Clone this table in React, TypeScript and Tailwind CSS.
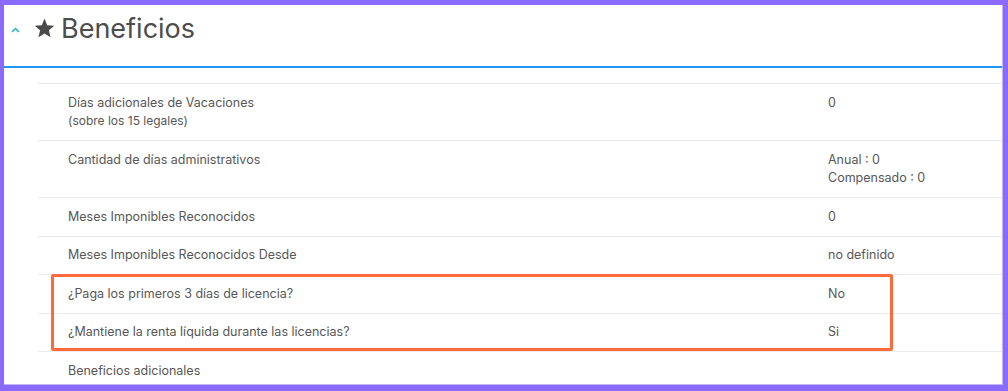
import React from "react";

type Row = {
  label: string;
  sub?: string;
  values: string[];
};

const rows: Row[] = [
  {
    label: "Días adicionales de Vacaciones",
    sub: "(sobre los 15 legales)",
    values: ["0"],
  },
  {
    label: "Cantidad de días administrativos",
    values: ["Anual : 0", "Compensado : 0"],
  },
  { label: "Meses Imponibles Reconocidos", values: ["0"] },
  { label: "Meses Imponibles Reconocidos Desde", values: ["no definido"] },
  { label: "¿Paga los primeros 3 días de licencia?", values: ["No"] },
  { label: "¿Mantiene la renta líquida durante las licencias?", values: ["Si"] },
  { label: "Beneficios adicionales", values: [] },
];

function StarIcon() {
  return (
    <svg width="21" height="20" viewBox="0 0 24 23" className="shrink-0">
      <path
        d="M12 0.6l3.1 7.6 8.2 0.6-6.3 5.3 2 8-7-4.4-7 4.4 2-8L0.7 8.8l8.2-0.6z"
        fill="#4a4a4a"
      />
    </svg>
  );
}

function ChevronUp() {
  return (
    <svg width="9" height="6" viewBox="0 0 9 6" className="shrink-0">
      <path d="M1 5L4.5 1.5L8 5" fill="none" stroke="#1fb3cc" strokeWidth="1.5" />
    </svg>
  );
}

export default function App() {
  return (
    <div
      className="relative h-[391px] w-[1008px] overflow-hidden border-[#8a6bfe] border-t-[5px] border-l-4 border-r-[5px] border-b-[6px] bg-white"
      style={{ fontFamily: "Inter, 'Noto Sans', sans-serif" }}
    >
      <div className="h-full border-r border-b border-[#c2b4ff]">
        {/* header */}
        <div className="flex h-[61px] items-start pt-[9px] pl-[7px]">
          <div className="flex h-[28px] items-center">
            <span className="mt-[3px]">
              <ChevronUp />
            </span>
            <span className="ml-[14px]">
              <StarIcon />
            </span>
            <h2 className="ml-[6px] text-[27px] leading-none text-[#4d4d4d]">
              Beneficios
            </h2>
          </div>
        </div>
        <div className="h-[2px] bg-[#2196f3]" />

        {/* rows */}
        <div className="ml-[34px] mt-[15px] border-t border-[#ebebeb]">
          {rows.map((row) => (
            <div
              key={row.label}
              className="flex border-b border-[#ebebeb] py-[9.5px] text-[12.5px] leading-[18.5px] text-[#575757]"
            >
              <div className="w-[790px] shrink-0 pl-[30px]">
                <div>{row.label}</div>
                {row.sub && <div className="text-[12px]">{row.sub}</div>}
              </div>
              <div>
                {row.values.map((v) => (
                  <div key={v}>{v}</div>
                ))}
              </div>
            </div>
          ))}
        </div>
      </div>

      {/* highlight box */}
      <div className="absolute left-[47px] top-[269px] h-[77px] w-[842px] rounded-[2px] border-[3px] border-[#ff6a3d]" />
    </div>
  );
}
